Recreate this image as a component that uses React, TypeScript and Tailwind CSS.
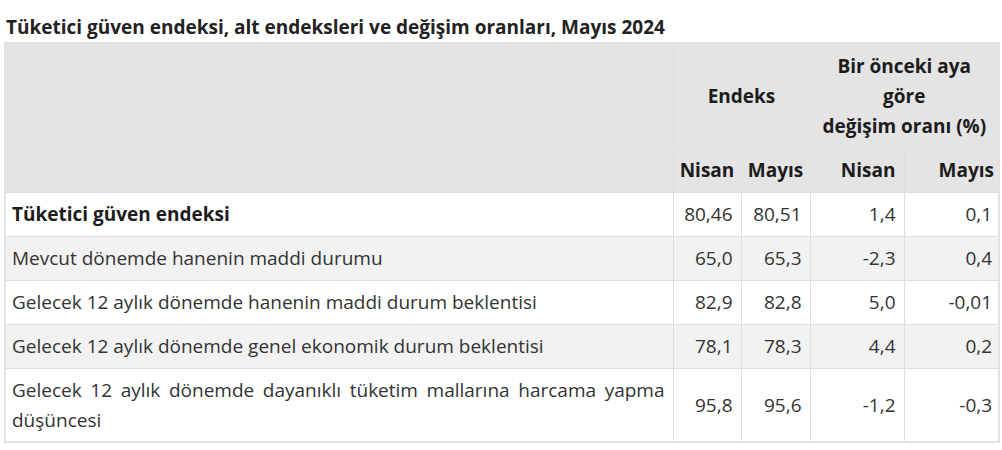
import React from "react";

type Row = {
  label: string;
  values: [string, string, string, string];
  bold?: boolean;
};

const rows: Row[] = [
  { label: "Tüketici güven endeksi", values: ["80,46", "80,51", "1,4", "0,1"], bold: true },
  { label: "Mevcut dönemde hanenin maddi durumu", values: ["65,0", "65,3", "-2,3", "0,4"] },
  { label: "Gelecek 12 aylık dönemde hanenin maddi durum beklentisi", values: ["82,9", "82,8", "5,0", "-0,01"] },
  { label: "Gelecek 12 aylık dönemde genel ekonomik durum beklentisi", values: ["78,1", "78,3", "4,4", "0,2"] },
  {
    label: "Gelecek 12 aylık dönemde dayanıklı tüketim mallarına harcama yapma düşüncesi",
    values: ["95,8", "95,6", "-1,2", "-0,3"],
  },
];

const cell = "border border-[#dedede] px-2 leading-[30px]";

export default function App() {
  return (
    <div className="h-[450px] w-[1002px] bg-white font-['Open_Sans',sans-serif] text-[19px] text-[#333]">
      <div className="px-[6px] pt-[13px] text-[19px] font-bold leading-[29px] text-[#222]">
        Tüketici güven endeksi, alt endeksleri ve değişim oranları, Mayıs 2024
      </div>
      <div className="pl-[4px]">
        <table className="w-[994px] table-fixed border-collapse border-2 border-[#e2e2e2]">
          <colgroup>
            <col className="w-[668px]" />
            <col className="w-[68px]" />
            <col className="w-[69px]" />
            <col className="w-[94px]" />
            <col className="w-[95px]" />
          </colgroup>
          <thead className="bg-[#e4e4e4] font-bold text-[#1c1c1c]">
            <tr className="h-[105px]">
              <th className={cell} />
              <th colSpan={2} className={`${cell} text-center`}>
                Endeks
              </th>
              <th colSpan={2} className={`${cell} text-center`}>
                Bir önceki aya
                <br />
                göre
                <br />
                değişim oranı (%)
              </th>
            </tr>
            <tr className="h-[44px]">
              <th className={cell} />
              <th className={`${cell} text-center !px-1`}>Nisan</th>
              <th className={`${cell} text-center !px-1`}>Mayıs</th>
              <th className={`${cell} text-right`}>Nisan</th>
              <th className={`${cell} text-right !pr-[4px]`}>Mayıs</th>
            </tr>
          </thead>
          <tbody>
            {rows.map((r, i) => (
              <tr
                key={r.label}
                className={`${i % 2 === 1 ? "bg-[#f2f2f2]" : "bg-white"} ${i === 4 ? "h-[74px]" : "h-[44px]"}`}
              >
                <td className={`${cell} !pl-[6px] text-justify ${r.bold ? "font-bold text-[#1c1c1c]" : ""}`}>
                  {r.label}
                </td>
                {r.values.map((v, j) => (
                  <td key={j} className={`${cell} text-right ${j === 3 ? "!pr-[6px]" : ""}`}>
                    {v}
                  </td>
                ))}
              </tr>
            ))}
          </tbody>
        </table>
      </div>
    </div>
  );
}
